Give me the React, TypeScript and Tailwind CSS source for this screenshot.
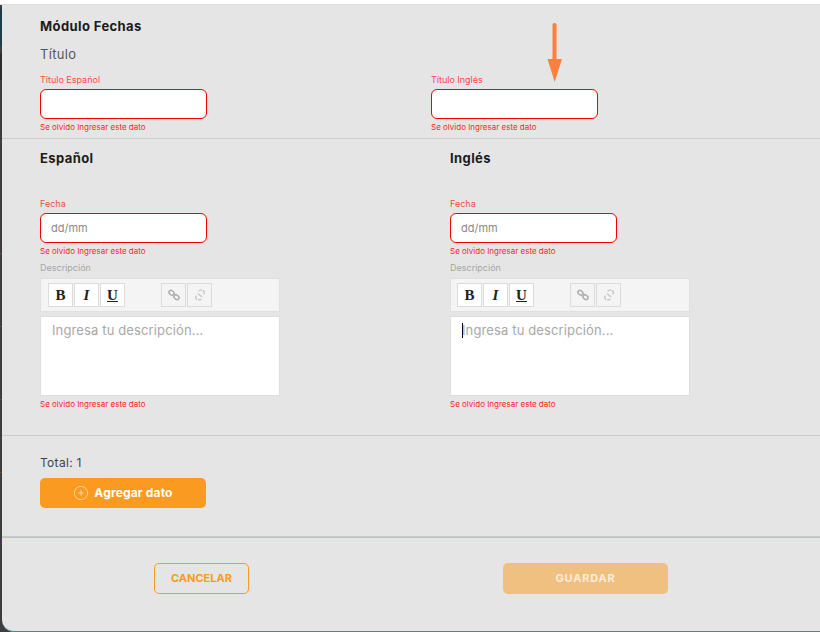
import { CirclePlus } from 'lucide-react';

const sans = { fontFamily: 'Inter, "Open Sans", sans-serif' };

function FieldError() {
  return <p className="h-[10px] mt-[3px] text-[8px] leading-[10px] text-[#ff1f1f]">Se olvido Ingresar este dato</p>;
}

function RedField({ label, placeholder }: { label: string; placeholder?: string }) {
  return (
    <div className="w-[167px]">
      <p className="h-[12px] mb-[3px] text-[9px] leading-[12px] text-[#ff4a4a]">{label}</p>
      <div className="h-[30px] flex items-center px-[10px] bg-white border-[1.5px] border-[#f50000] rounded-[6px] text-[11px] text-[#8a8a8a]">
        {placeholder}
      </div>
      <FieldError />
    </div>
  );
}

function LinkIcon() {
  return (
    <svg width="14" height="14" viewBox="0 0 14 14" fill="none" stroke="#adadad" strokeWidth="1.5">
      <rect x="1.8" y="2.8" width="5.4" height="4" rx="2" transform="rotate(40 4.5 4.8)" />
      <rect x="6.8" y="7.2" width="5.4" height="4" rx="2" transform="rotate(40 9.5 9.2)" />
    </svg>
  );
}

function UnlinkIcon() {
  return (
    <svg width="14" height="14" viewBox="0 0 14 14" fill="none" stroke="#c6c6c6" strokeWidth="1.3" strokeLinecap="round">
      <path d="M6 2.6 Q7.5 1.8 8.5 2.2 M10.2 2.6 Q12 4 11 6" />
      <path d="M8 11.4 Q6.5 12.2 5.5 11.8 M3.8 11.4 Q2 10 3 8" />
      <path d="M5.5 6 L8.5 8.5" />
    </svg>
  );
}

function ToolButton({ children }: { children: React.ReactNode }) {
  return (
    <div className="w-[25px] h-[24px] flex items-center justify-center bg-white border border-[#dcdcdc] text-[15px] leading-none text-[#222]" style={{ fontFamily: '"Liberation Serif", serif' }}>
      {children}
    </div>
  );
}

function LangColumn({ title, caret }: { title: string; caret?: boolean }) {
  return (
    <div className="w-[240px]">
      <h3 className="h-[16px] text-[13px] leading-[16px] font-bold tracking-[0.4px] text-[#1c1c1c]">{title}</h3>
      <div className="mt-[32px]">
        <RedField label="Fecha" placeholder="dd/mm" />
      </div>
      <p className="h-[12px] mt-[6px] text-[9px] leading-[12px] text-[#a5a5a5]">Descripción</p>
      <div className={`h-[34px] mt-[4px] flex items-center gap-[36px] bg-[#f4f4f4] border border-[#e0e0e0] ${caret ? 'pl-[6px]' : 'pl-[7px]'}`}>
        <div className="flex gap-px">
          <ToolButton><b>B</b></ToolButton>
          <ToolButton><b><i>I</i></b></ToolButton>
          <ToolButton><b><u>U</u></b></ToolButton>
        </div>
        <div className="flex gap-px">
          <div className="w-[25px] h-[24px] flex items-center justify-center border border-[#dcdcdc]"><LinkIcon /></div>
          <div className="w-[25px] h-[24px] flex items-center justify-center border border-[#dcdcdc]"><UnlinkIcon /></div>
        </div>
      </div>
      <div className="h-[80px] mt-[4px] pl-[11px] pt-[4px] bg-white border border-[#dedede] text-[13px] leading-[18px] tracking-[0.13px] text-[#a8a8a8] flex items-start">
        {caret && <span className="w-px h-[15px] mt-[2px] -mr-px bg-black" />}
        <span>Ingresa tu descripción...</span>
      </div>
      <FieldError />
    </div>
  );
}

export default function App() {
  return (
    <div className="w-[820px] h-[632px] overflow-hidden bg-white flex flex-col" style={sans}>
      <div className="h-[5px] shrink-0 bg-white border-b border-[#dedede]" />
      <div className="flex-1 min-h-0 bg-[#3d3d3d] flex">
        {/* page behind the modal, only a sliver shows */}
        <div className="w-[2px] shrink-0">
          <div className="h-[37px] mt-[4px] bg-[#1e3c4c]" />
          <div className="h-[27px] mt-[7px] bg-[#2e2e2e]" />
          <div className="h-px mt-[173px] bg-[#6b4a2a]" />
          <div className="h-px mt-[72px] bg-[#6b4a2a]" />
          <div className="h-px mt-[72px] bg-[#6b4a2a]" />
          <div className="h-px mt-[72px] bg-[#6b4a2a]" />
        </div>
        <div className="relative flex-1 min-w-0 h-full bg-[#e5e5e5] rounded-bl-[12px] border-b border-[#4d8a86] flex flex-col">
          {/* arrow from the annotated screenshot */}
          <svg className="absolute left-[545px] top-[17px]" width="16" height="62" viewBox="0 0 16 62">
            <path d="M5.5 2 Q7.5 0 9.5 2 L9.5 37 L15 37 L7.7 60 L0.5 37 L5.5 37 Z" fill="#ff7f3e" />
          </svg>

          <div className="h-[133px] shrink-0 pl-[38px] pt-[13px]">
            <h2 className="h-[16px] text-[13px] leading-[16px] font-bold tracking-[0.4px] text-[#1c1c1c]">Módulo Fechas</h2>
            <p className="h-[16px] mt-[12px] text-[13px] leading-[16px] tracking-[0.3px] text-[#555]">Título</p>
            <div className="mt-[12px] flex gap-[224px]">
              <RedField label="Título Español" />
              <RedField label="Título Inglés" />
            </div>
          </div>

          <div className="h-[298px] shrink-0 border-t border-b border-[#cbcbcb] pl-[38px] pt-[11px] flex gap-[170px]">
            <LangColumn title="Español" />
            <LangColumn title="Inglés" caret />
          </div>

          <div className="h-[101px] shrink-0 pl-[38px] pt-[19px] border-b border-[#c9c9c9]">
            <p className="h-[16px] text-[12px] leading-[16px] tracking-[0.3px] text-[#444]">Total: 1</p>
            <button className="w-[166px] h-[30px] mt-[7px] flex items-center justify-center gap-[5px] bg-[#fb9a20] rounded-[5px] text-[12px] font-bold tracking-[0.15px] text-white">
              <CirclePlus size={16} strokeWidth={1.2} className="text-[#ffe2b8]" />
              Agregar dato
            </button>
          </div>

          <div className="flex-1 pl-[152px] pt-[25px] flex gap-[254px] items-start border-t border-[#f5bd4f]">
            <button className="w-[95px] h-[31px] border border-[#fb9a20] rounded-[5px] text-[11px] font-bold text-[#fb9a20]">CANCELAR</button>
            <button className="w-[165px] h-[31px] bg-[#f0c080] rounded-[5px] text-[11px] font-bold tracking-[0.8px] text-[#f8ecdc]">GUARDAR</button>
          </div>
        </div>
      </div>
    </div>
  );
}
